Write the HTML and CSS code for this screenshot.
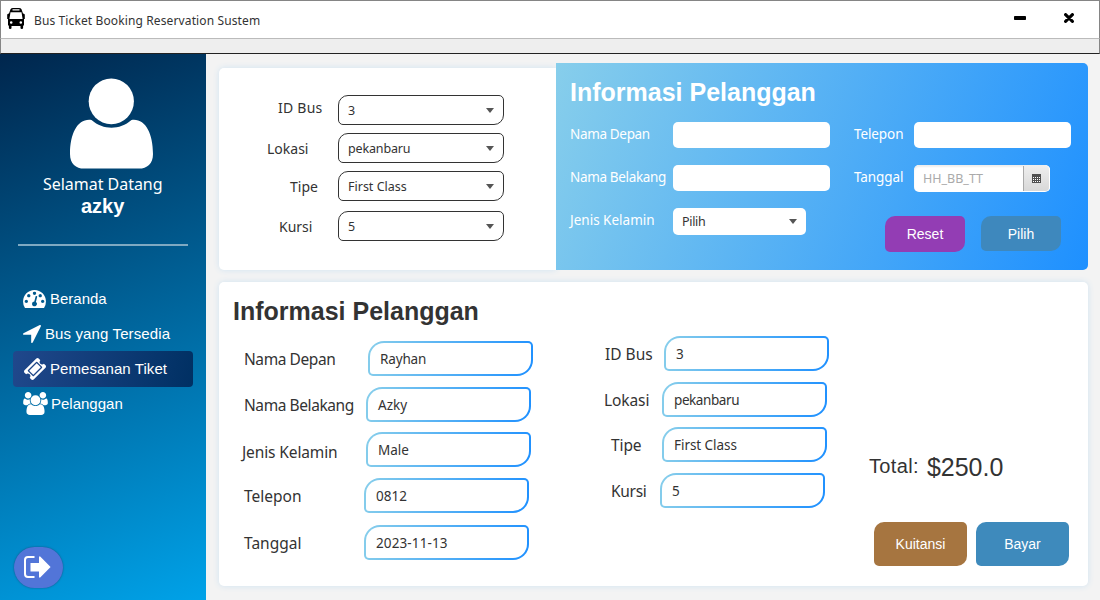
FILE: index.html
```html
<!DOCTYPE html>
<html lang="id">
<head>
<meta charset="utf-8">
<title>Bus Ticket Booking Reservation Sustem</title>
<link rel="stylesheet" href="styles.css">
</head>
<body>
<header class="titlebar">
  <svg class="bus-icon" viewBox="0 0 18 21" width="18" height="21"><path fill-rule="evenodd" d="M3.5 1.2Q4.2 0 6 0h6q1.8 0 2.5 1.2L16 5.6q1 .2 1.8 1V11H17v6.5h-.9V20q0 1-1.300 1t-1.300-1v-2h-9v2q0 1-1.300 1t-1.300-1v-2.500H1V11H.2V6.600q.8-.8 1.800-1zM5.500 1.300v1.200h7V1.300zM3.500 4.200 2.400 11h13.200l-1.100-6.800zM4.200 13.200a1.300 1.300 0 1 0 .01 2.600 1.300 1.300 0 0 0 0-2.600zm9.600 0a1.300 1.300 0 1 0 .01 2.600 1.300 1.300 0 0 0 0-2.600z"/></svg>
  <span class="app-title">Bus Ticket Booking Reservation Sustem</span>
  <svg class="minimize" viewBox="0 0 12 4" width="12" height="4"><rect width="12" height="4" rx=".8"/></svg>
  <svg class="close" viewBox="0 0 10 10" width="10" height="10"><path d="M1.600 1.600 8.400 8.400M8.400 1.600 1.600 8.400" stroke="#000" stroke-width="3.100" stroke-linecap="round"/></svg>
</header>
<div class="toolbar"></div>
<div class="body">
  <aside class="sidebar">
    <svg class="avatar" viewBox="0 0 83 91" width="83" height="91"><ellipse cx="41.300" cy="23.300" rx="22.600" ry="22.900"/><path d="M21.500 42C8 40 0 55 0 76c0 10 6 14.600 14 14.600h55c8 0 14-4.600 14-14.600 0-21-8-36-21.500-34-12 10.300-28 10.300-40 0z"/></svg>
    <div class="welcome">Selamat Datang</div>
    <div class="username">azky</div>
    <div class="divider"></div>
    <nav class="menu">
      <div class="item"><svg viewBox="0 256 1792 1408" width="23" height="18"><path d="M384 1152q0-53-37.500-90.500t-90.500-37.500-90.500 37.500-37.500 90.500 37.500 90.500 90.500 37.500 90.500-37.500 37.500-90.500zm192-448q0-53-37.500-90.500t-90.500-37.500-90.500 37.500-37.500 90.500 37.500 90.500 90.500 37.500 90.500-37.500 37.500-90.500zm428 481l101-382q6-26-7.500-48.500t-38.500-29.500-48 6.500-30 39.500l-101 382q-60 5-107 43.500t-63 98.500q-20 77 20 146t117 89 146-20 89-117q16-60-6-117t-72-91zm660-33q0-53-37.500-90.500t-90.500-37.500-90.500 37.500-37.500 90.500 37.500 90.500 90.500 37.500 90.500-37.500 37.500-90.500zm-640-640q0-53-37.500-90.500t-90.500-37.500-90.500 37.500-37.500 90.500 37.500 90.500 90.500 37.500 90.500-37.500 37.500-90.500zm448 192q0-53-37.500-90.500t-90.500-37.500-90.500 37.500-37.500 90.500 37.500 90.500 90.500 37.500 90.500-37.500 37.500-90.500zm320 448q0 261-141 483-19 29-54 29h-1402q-35 0-54-29-141-221-141-483 0-182 71-348t191-286 286-191 348-71 348 71 286 191 191 286 71 348z"/></svg><span>Beranda</span></div>
      <div class="item tersedia"><svg viewBox="190 254 1412 1412" width="18" height="18"><path d="M1593 349l-640 1280q-17 35-57 35-5 0-15-2-22-5-35.500-22.500t-13.500-39.500v-576h-576q-22 0-39.500-13.500t-22.500-35.500 4-42 29-30l1280-640q13-7 29-7 27 0 45 19 15 14 18.500 34.500t-6.500 39.500z"/></svg><span>Bus yang Tersedia</span></div>
      <div class="item active"><svg viewBox="53 53 1686 1686" width="22" height="22"><path d="M1024 452l316 316-572 572-316-316zm-211 979l618-618q19-19 19-45t-19-45l-362-362q-18-18-45-18t-45 18l-618 618q-19 19-19 45t19 45l362 362q18 18 45 18t45-18zm889-637l-907 908q-37 37-90.500 37t-90.500-37l-126-126q56-56 56-136t-56-136-136-56-136 56l-125-126q-37-37-37-90.500t37-90.500l907-906q37-37 90.500-37t90.500 37l125 125q-56 56-56 136t56 136 136 56 136-56l126 125q37 37 37 90.500t-37 90.500z"/></svg><span>Pemesanan Tiket</span></div>
      <div class="item people"><svg viewBox="0 0 1920 1792" width="25" height="23"><path d="M593 896q-162 5-265 128h-134q-82 0-138-40.500t-56-118.500q0-353 124-353 6 0 43.500 21t97.500 42.500 119 21.500q67 0 133-23-5 37-5 66 0 139 81 256zm1071 637q0 120-73 189.500t-194 69.500h-874q-121 0-194-69.500t-73-189.500q0-53 3.500-103.500t14-109 26.500-108.500 43-97.500 62-81 85.500-53.500 111.500-20q10 0 43 21.500t73 48 107 48 135 21.500 135-21.500 107-48 73-48 43-21.500q61 0 111.500 20t85.500 53.500 62 81 43 97.500 26.500 108.500 14 109 3.500 103.500zm-1024-1277q0 106-75 181t-181 75-181-75-75-181 75-181 181-75 181 75 75 181zm704 384q0 159-112.500 271.500t-271.500 112.500-271.500-112.500-112.500-271.500 112.500-271.500 271.500-112.500 271.500 112.500 112.500 271.500zm576 225q0 78-56 118.500t-138 40.500h-134q-103-123-265-128 81-117 81-256 0-29-5-66 66 23 133 23 59 0 119-21.500t97.500-42.500 43.500-21q124 0 124 353zm-128-609q0 106-75 181t-181 75-181-75-75-181 75-181 181-75 181 75 75 181z"/></svg><span>Pelanggan</span></div>
    </nav>
    <div class="logout"><svg viewBox="0 0 27 22" width="27" height="22"><path d="M10.500 1H4Q1 1 1 4v14q0 3 3 3h6.500" fill="none" stroke="#fff" stroke-width="2"/><path d="M6.500 7H15V.6h1.200L26.600 11 16.200 21.400H15V15.500H6.500z"/></svg></div>
  </aside>
  <main class="main">
    <section class="top">
      <div class="card choose">
        <div class="pick r1"><label>ID Bus</label><div class="combo">3</div></div>
        <div class="pick r2"><label>Lokasi</label><div class="combo">pekanbaru</div></div>
        <div class="pick r3"><label>Tipe</label><div class="combo">First Class</div></div>
        <div class="pick r4"><label>Kursi</label><div class="combo">5</div></div>
      </div>
      <div class="panel">
        <h2>Informasi Pelanggan</h2>
        <div class="panel-cols">
          <div class="col">
            <div class="entry name"><label>Nama Depan</label><div class="input"></div></div>
            <div class="entry name"><label>Nama Belakang</label><div class="input"></div></div>
            <div class="entry gender"><label>Jenis Kelamin</label><div class="input combo-white">Pilih</div></div>
          </div>
          <div class="col second">
            <div class="entry"><label>Telepon</label><div class="input"></div></div>
            <div class="entry"><label>Tanggal</label><div class="input date"><span>HH_BB_TT</span><div class="cal"><svg viewBox="0 0 9 9" width="9" height="9" shape-rendering="crispEdges"><rect width="9" height="9" fill="#505050"/><path d="M1 3.500h7M1 5.500h7M1 7.500h7" stroke="#fff" stroke-dasharray="1 1"/></svg></div></div></div>
            <div class="actions"><div class="btn reset">Reset</div><div class="btn choose-btn">Pilih</div></div>
          </div>
        </div>
      </div>
    </section>
    <section class="card summary">
      <div class="left">
        <h2>Informasi Pelanggan</h2>
        <div class="row a1"><label>Nama Depan</label><div class="value">Rayhan</div></div>
        <div class="row a2"><label>Nama Belakang</label><div class="value">Azky</div></div>
        <div class="row a3"><label>Jenis Kelamin</label><div class="value">Male</div></div>
        <div class="row a4"><label>Telepon</label><div class="value">0812</div></div>
        <div class="row a5"><label>Tanggal</label><div class="value">2023-11-13</div></div>
      </div>
      <div class="middle">
        <div class="row b1"><label>ID Bus</label><div class="value">3</div></div>
        <div class="row b2"><label>Lokasi</label><div class="value">pekanbaru</div></div>
        <div class="row b3"><label>Tipe</label><div class="value">First Class</div></div>
        <div class="row b4"><label>Kursi</label><div class="value">5</div></div>
      </div>
      <div class="pay">
        <div class="total"><span class="total-label">Total:</span><span class="amount">$250.0</span></div>
        <div class="pay-buttons"><div class="btn receipt">Kuitansi</div><div class="btn paybtn">Bayar</div></div>
      </div>
    </section>
  </main>
</div>
</body>
</html>
```
FILE: styles.css
```css
* { box-sizing: border-box; }
body { margin: 0; width: 1100px; height: 600px; overflow: hidden; background: #f3f3f3; color: #333; font-family: "Noto Sans", sans-serif; white-space: nowrap; }
h2 { margin: 0; font: bold 25px/30px "Liberation Sans", sans-serif; }
svg { display: block; flex: none; }

.titlebar { display: flex; align-items: center; height: 39px; background: #fff; border: 1px solid #858585; border-bottom-color: #bbb; padding-left: 6px; }
.bus-icon { margin-top: -2px; }
.app-title { margin-left: 9px; font-size: 12px; letter-spacing: .12px; margin-top: 2px; }
.minimize { margin-left: auto; margin-top: -4px; }
.close { margin: -3px 25px 0 38px; }
.toolbar { height: 15px; background: #eee; border: solid #858585; border-width: 0 1px 1px; border-bottom-color: #222; }
.body { display: flex; height: 546px; }

.sidebar { width: 206px; flex: none; background: linear-gradient(159.3deg, #00264d, #00a2e8); color: #fff; padding-left: 13px; display: flex; flex-direction: column; }
.sidebar svg { fill: #fff; }
.avatar { margin: 24px 0 0 57px; }
.welcome { margin: 5px 0 0 30px; font-size: 16px; line-height: 20px; letter-spacing: -.03px; }
.username { margin: 0 0 0 68px; font: bold 20px/24px "Liberation Sans", sans-serif; }
.divider { width: 170px; height: 2px; margin: 26px 0 0 5px; background: #7fa9c2; }
.menu { margin-top: 35px; font: 15px/35px "Liberation Sans", sans-serif; }
.item { display: flex; align-items: center; height: 35px; padding-left: 10px; width: 180px; gap: 4px; }
.item.tersedia { letter-spacing: .12px; }
.item.active { height: 36px; line-height: 34px; letter-spacing: .08px; border-radius: 4px; background: linear-gradient(101deg, #20488c, #003063); padding: 0 0 1px 11px; }
.item.people { margin-top: -1px; gap: 3px; }
.logout { width: 49px; height: 41px; margin: 126px 0 0 1px; border-radius: 21px; background: #5275d8; box-shadow: 0 0 2px #14507f; display: flex; align-items: center; padding: 0 0 1px 10px; }

.main { width: 894px; padding: 9px 12px 0 13px; }
.card { background: #fff; border-radius: 5px; box-shadow: 0 0 6px #cfe3f2; }
.top { display: flex; align-items: flex-end; }
.choose { width: 337px; height: 202px; padding-top: 27px; border-radius: 5px 0 0 5px; }
.pick { display: flex; align-items: center; height: 30px; margin-bottom: 8px; padding-left: 48px; font-size: 14px; }
.pick label { width: 71px; padding-left: 11px; flex: none; }
.r1 label { margin-top: -6px; letter-spacing: .25px; }
.r2 label { padding-left: 0; }
.r3 label { padding-left: 23px; }
.r4 { margin-top: 10px; }
.r4 label { padding-left: 12px; }
.combo { width: 166px; height: 30px; border: 1px solid #333; border-radius: 10px 5px 10px 5px; font-size: 12.500px; }
.r2 .combo { letter-spacing: -.15px; }
.combo, .combo-white { display: flex; align-items: center; justify-content: space-between; padding: 0 9px; }
.combo::after, .combo-white::after { content: ""; border: solid transparent; border-width: 5px 4.500px 0; border-top-color: #555; }

.panel { width: 532px; height: 207px; border-radius: 0 5px 5px 0; background: linear-gradient(111.3deg, #87ceeb, #1e90ff); color: #fff; padding: 14px 0 0 14px; position: relative; }
.panel-cols { display: flex; margin-top: 15px; }
.col { width: 284px; }
.entry { display: flex; height: 26px; margin-bottom: 17px; font-size: 13.500px; }
.entry label { width: 103px; line-height: 24px; }
.name label { letter-spacing: -.34px; }
.second { width: 230px; }
.second .entry label { width: 60px; letter-spacing: -.1px; }
.input { width: 157px; height: 26px; background: #fff; border-radius: 5px; color: #333; font-size: 12.500px; }
.combo-white { width: 133px; height: 27px; letter-spacing: -.3px; }
.date { width: 136px; height: 27px; display: flex; justify-content: space-between; align-items: center; padding-left: 9px; color: #aaa; box-shadow: inset 0 2px 2px #eee; }
.cal { width: 27px; height: 25px; border-left: 1px solid #aaa; border-right: 1px solid #fff; border-radius: 0 4px 4px 0; background: linear-gradient(#eee, #d8d8d8); display: grid; place-items: center; }
.actions { display: flex; gap: 16px; margin: 25px 0 0 31px; }
.btn { display: grid; place-items: center; color: #fff; font: 14px/16px "Liberation Sans", sans-serif; border-radius: 10px 5px 10px 5px; }
.reset { width: 80px; height: 36px; background: #933db4; }
.choose-btn { width: 80px; height: 35px; background: #3e88bd; }
.second .entry + .entry { margin-bottom: 0; }

.summary { display: flex; height: 304px; margin-top: 12px; }
.left { width: 385px; padding: 14px 0 0 14px; }
.left h2 { margin-bottom: 15px; }
.row { display: flex; align-items: center; height: 35px; font-size: 15.500px; }
.row label { flex: none; }
.value { width: 165px; height: 35px; border: 2px solid transparent; border-radius: 16px 5px 16px 5px; background: linear-gradient(#fff, #fff) padding-box, linear-gradient(100deg, #87ceeb, #1e90ff) border-box; padding-left: 10px; font-size: 13.500px; line-height: 33px; }
.left .row { padding-left: 11px; }
.left .row label { width: 122px; }
.left .a1 label { width: 124px; letter-spacing: -.42px; }
.left .a2 label { letter-spacing: -.42px; }
.a1 .value { letter-spacing: -.15px; }
.a5 .value { letter-spacing: .12px; }
.a2 { margin-top: 11px; }
.a3 { margin-top: 10px; }
.a4 { margin-top: 11px; }
.a5 { margin-top: 12px; }
.left .a3 label { padding-top: 4px; margin-left: -2px; width: 124px; letter-spacing: -.12px; }
.left .a4 label, .left .a5 label { width: 120px; }
.middle { width: 250px; padding-top: 54px; }
.b1 label { width: 59px; }
.b2 { margin: 11px 0 10px -1px; letter-spacing: -.1px; }
.b2 label { width: 58px; }
.b2 .value { letter-spacing: -.42px; }
.b3 .value { letter-spacing: -.05px; }
.b3 label { width: 51px; letter-spacing: -.1px; }
.b4 label { width: 49px; letter-spacing: -.3px; }
.b3, .b4 { padding-left: 7px; }
.b1, .b2 { padding-left: 1px; }
.b4 { margin-top: 11px; }
.pay { padding: 170px 0 0 15px; font-family: "Liberation Sans", sans-serif; }
.total { display: flex; height: 30px; line-height: 30px; gap: 8px; }
.total-label { font-size: 20px; line-height: 28px; letter-spacing: .35px; }
.amount { font-size: 25px; }
.pay-buttons { display: flex; gap: 9px; margin: 40px 0 0 5px; }
.pay-buttons .btn { width: 93px; height: 44px; }
.receipt { background: #a67540; }
.paybtn { background: #3e8abc; }
```
